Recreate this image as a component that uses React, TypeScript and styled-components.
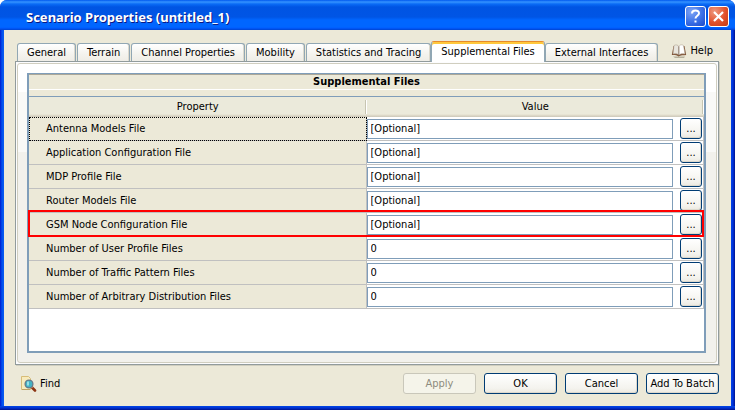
import React, { useState } from 'react';
import styled, { createGlobalStyle } from 'styled-components';

const Global = createGlobalStyle`
  * { box-sizing: border-box; }
  body { margin: 0; background: #fff; }
  body, button, input, table {
    font: 11px/14px "DejaVu Sans Condensed", "DejaVu Sans", sans-serif;
    color: #000;
  }
`;

const Window = styled.div`
  min-height: 100vh;
  display: flex;
  flex-direction: column;
  background: linear-gradient(90deg, #0019cf, #0050ee 2px, #0b5cf0 4px, #0044e8 calc(100% - 4px), #0030d8 calc(100% - 2px), #00138c);
  border-radius: 7px 7px 0 0;
  overflow: hidden;
`;

const TitleBar = styled.header`
  display: flex;
  align-items: center;
  gap: 2px;
  height: 30px;
  padding: 3px 6px 0 26px;
  background: linear-gradient(#0058ee 0, #3593ff 2px, #0a6bf6 4px, #0054e3 7px, #0055e5 17px, #0066ff 20px, #0066ff 27px, #005bff 28px, #0043cf 30px);
`;

const Title = styled.h1`
  flex: 1;
  margin: 0;
  font: bold 13px/18px "Noto Sans", sans-serif;
  color: #fff;
  text-shadow: 1px 1px 0 #0a1883;
`;

const TitleButton = styled.button<{ $close?: boolean }>`
  display: flex;
  align-items: center;
  justify-content: center;
  width: 21px;
  height: 21px;
  padding: 0;
  border: 1px solid #fff;
  border-radius: 3px;
  background: ${p => p.$close
    ? 'radial-gradient(circle at 30% 25%, #ee9a80, #e2512b 55%, #c53a12)'
    : 'radial-gradient(circle at 30% 25%, #7fa5f5, #3a6fe6 55%, #1c48c8)'};
`;

const Body = styled.main`
  flex: 1;
  display: flex;
  flex-direction: column;
  margin: 0 4px;
  padding: 11px 12px 12px 11px;
  background: #ece9d8;
`;

const Bottom = styled.div`
  height: 4px;
  background: linear-gradient(#0047e8, #0030d0 50%, #00138c);
`;

const TabRow = styled.nav`
  display: flex;
  align-items: flex-end;
  padding-left: 2px;
`;

const TabList = styled.div`
  flex: 1;
  display: flex;
  align-items: flex-end;
  gap: 1px;
`;

const Tab = styled.button<{ $active: boolean }>`
  flex: 1 1 auto;
  position: relative;
  height: ${p => (p.$active ? 21 : 18)}px;
  margin: ${p => (p.$active ? '0 -1px -1px' : '0')};
  padding: 0 2px;
  border: 1px solid #91a7b4;
  border-bottom: 0;
  border-radius: 3px 3px 0 0;
  white-space: nowrap;
  background: ${p => (p.$active ? '#fff' : 'linear-gradient(#fff, #f4f3ee 60%, #efede6)')};
  ${p => (p.$active
    ? 'z-index: 1; border-top-color: #e68b2c; box-shadow: inset 0 2px 0 #ffc83c;'
    : 'box-shadow: inset -1px 0 0 #dcd9cd;')}
`;

const LinkButton = styled.a<{ $help?: boolean }>`
  display: flex;
  align-items: center;
  gap: 3px;
  align-self: center;
  margin: ${p => (p.$help ? '0 6px 0 13px' : '0 auto 0 6px')};
  color: #000;
  text-decoration: none;
`;

const Panel = styled.section`
  flex: 1;
  display: flex;
  border: 1px solid #919b9c;
  padding: 1px;
  background: #fcfcfe;
  box-shadow: 1px 1px 0 #d0cebf;
`;

const PanelInner = styled.div`
  flex: 1;
  display: flex;
  padding: 9px 10px 9px 9px;
  border: 1px solid #d0cebf;
  border-radius: 3px;
  background: linear-gradient(#fff 28px, #f9f9f7 28px, #f9f9f7 88px, #f2f1ec 88px);
`;

const Frame = styled.div`
  flex: 1;
  border: 2px solid #7f9db9;
  border-top-width: 1px;
  background: #fff;
`;

const Heading = styled.h2`
  margin: 0;
  border-top: 1px solid #aca899;
  border-bottom: 1px solid #fff;
  font-size: 11px;
  line-height: 14px;
  text-align: center;
  background: #ece9d8;
`;

const Strip = styled.div`
  height: 6px;
  background: #ece9d8;
`;

const Table = styled.table`
  width: 100%;
  table-layout: fixed;
  border-collapse: separate;
  border-spacing: 0;
  border-top: 1px solid #7f9db9;
`;

const HeadCell = styled.th`
  position: relative;
  height: 20px;
  padding: 0;
  font-weight: normal;
  text-align: center;
  background: linear-gradient(#ebeadb 17px, #e2decd 18px, #cbc7b8 20px);
  &::after {
    content: '';
    position: absolute;
    right: 0;
    top: 3px;
    width: 2px;
    height: 14px;
    background: linear-gradient(90deg, #c7c5b2 1px, #fff 1px);
  }
`;

const NameCell = styled.th<{ $focused?: boolean }>`
  height: 24px;
  padding: 0 0 0 17px;
  font-weight: normal;
  text-align: left;
  background: #ece9d8;
  border: solid #c0c0c0;
  border-width: 0 1px 1px 0;
  ${p => p.$focused && 'outline: 1px dotted #000; outline-offset: -1px;'}
`;

const ValueCell = styled.td`
  height: 24px;
  padding: 0;
  border: solid #c0c0c0;
  border-width: 0 1px 1px 0;
`;

const Row = styled.tr<{ $marked?: boolean }>`
  position: relative;
  ${p => p.$marked && `
    & > td::after {
      content: '';
      position: absolute;
      inset: -3px 0 0 -1px;
      border: 2px solid #f00;
      pointer-events: none;
    }
  `}
`;

const Editor = styled.div`
  display: flex;
  align-items: center;
  gap: 7px;
  padding: 0 1px 0 0;
`;

const Field = styled.input`
  flex: 1;
  min-width: 0;
  height: 20px;
  padding: 0 3px;
  border: 1px solid #7f9db9;
  background: #fff;
`;

const Button = styled.button<{ $browse?: boolean }>`
  width: ${p => (p.$browse ? 22 : 73)}px;
  height: 21px;
  padding: 0;
  border: 1px solid #003c74;
  border-radius: 3px;
  white-space: nowrap;
  background: linear-gradient(#fff, #f4f3ee 75%, #ece9e0);
  box-shadow: inset -1px -1px 0 #dcd8cd;
  &:disabled {
    border-color: #c9c7ba;
    color: #8d8b7d;
    background: #f5f4ea;
    box-shadow: none;
  }
`;

const Footer = styled.footer`
  display: flex;
  align-items: center;
  gap: 8px;
  margin-top: 8px;
`;

const BookIcon = () => (
  <svg width="16" height="16" viewBox="0 0 16 16" aria-hidden="true">
    <path d="M2 13.500h12l-1 1.500H4z" fill="#b5b09c" />
    <path d="M2.500 3 .8 12c2.500 0 5-.2 6.700 1.500 2-1.500 5-1.200 7.700-1.500L13.500 3z" fill="#805437" />
    <path d="M3 2.500C5 1.300 7 2 8 3.500v8.500c-1.500-1.500-3.800-1.300-6-1z" fill="#e9e6de" stroke="#a99b89" strokeWidth=".5" />
    <path d="M8 3.500C8.500 2 10.500 1 12.500 2.500l1.500 8.500c-2.300-.3-4.500-.5-6 1z" fill="#fff" stroke="#a99b89" strokeWidth=".5" />
    <path d="M7.800 3.500V12" stroke="#8b7a6c" strokeWidth=".8" />
  </svg>
);

const FindIcon = () => (
  <svg width="16" height="16" viewBox="0 0 16 16" aria-hidden="true">
    <path d="M.5.5h7l2 2v11h-9z" fill="#f8ebbd" stroke="#d8bd78" />
    <path d="M1 13.500h8" stroke="#bfa264" />
    <path d="m10.500 11 3.500 3.500" stroke="#8c3514" strokeWidth="2.600" strokeLinecap="round" />
    <path d="m10.500 10.800 1 1" stroke="#d9935f" strokeWidth="2" />
    <circle cx="8" cy="8" r="3.900" fill="#43b3c4" stroke="#66798a" strokeWidth="1.300" />
    <path d="M7 5.500v4" stroke="#b5edf2" strokeWidth="1.500" />
  </svg>
);

const QuestionIcon = () => (
  <svg width="13" height="15" viewBox="0 0 13 15" aria-hidden="true">
    <path d="M3 4.500c0-4 7-4 7-.3 0 2.500-3.500 2.500-3.500 5.300" fill="none" stroke="#fff" strokeWidth="2" />
    <path d="M5.500 11.500h2v2h-2z" fill="#fff" />
  </svg>
);

const CloseIcon = () => (
  <svg width="13" height="13" viewBox="0 0 13 13" aria-hidden="true">
    <path d="m2 2 9 9M11 2l-9 9" stroke="#fff" strokeWidth="2.200" />
  </svg>
);

const tabs = ['General', 'Terrain', 'Channel Properties', 'Mobility', 'Statistics and Tracing', 'Supplemental Files', 'External Interfaces'];

const properties = [
  { name: 'Antenna Models File', value: '[Optional]', focused: true },
  { name: 'Application Configuration File', value: '[Optional]' },
  { name: 'MDP Profile File', value: '[Optional]' },
  { name: 'Router Models File', value: '[Optional]' },
  { name: 'GSM Node Configuration File', value: '[Optional]', marked: true },
  { name: 'Number of User Profile Files', value: '0' },
  { name: 'Number of Traffic Pattern Files', value: '0' },
  { name: 'Number of Arbitrary Distribution Files', value: '0' },
];

export default function App() {
  const [active, setActive] = useState('Supplemental Files');
  return (
    <>
      <Global />
      <Window>
        <TitleBar>
          <Title>Scenario Properties (untitled_1)</Title>
          <TitleButton aria-label="Context help"><QuestionIcon /></TitleButton>
          <TitleButton $close aria-label="Close"><CloseIcon /></TitleButton>
        </TitleBar>
        <Body>
          <TabRow>
            <TabList role="tablist">
              {tabs.map(t => (
                <Tab key={t} role="tab" aria-selected={t === active} $active={t === active} onClick={() => setActive(t)}>{t}</Tab>
              ))}
            </TabList>
            <LinkButton $help href="#help"><BookIcon />Help</LinkButton>
          </TabRow>
          <Panel>
            <PanelInner>
              <Frame>
                <Heading>Supplemental Files</Heading>
                <Strip />
                <Table>
                  <thead>
                    <tr>
                      <HeadCell scope="col">Property</HeadCell>
                      <HeadCell scope="col">Value</HeadCell>
                    </tr>
                  </thead>
                  <tbody>
                    {properties.map((p, i) => (
                      <Row key={p.name} $marked={p.marked}>
                        <NameCell scope="row" $focused={p.focused}>
                          <label htmlFor={`property-${i}`}>{p.name}</label>
                        </NameCell>
                        <ValueCell>
                          <Editor>
                            <Field id={`property-${i}`} defaultValue={p.value} />
                            <Button $browse aria-label={`Browse ${p.name}`}>...</Button>
                          </Editor>
                        </ValueCell>
                      </Row>
                    ))}
                  </tbody>
                </Table>
              </Frame>
            </PanelInner>
          </Panel>
          <Footer>
            <LinkButton href="#find"><FindIcon />Find</LinkButton>
            <Button disabled>Apply</Button>
            <Button>OK</Button>
            <Button>Cancel</Button>
            <Button>Add To Batch</Button>
          </Footer>
        </Body>
        <Bottom />
      </Window>
    </>
  );
}
